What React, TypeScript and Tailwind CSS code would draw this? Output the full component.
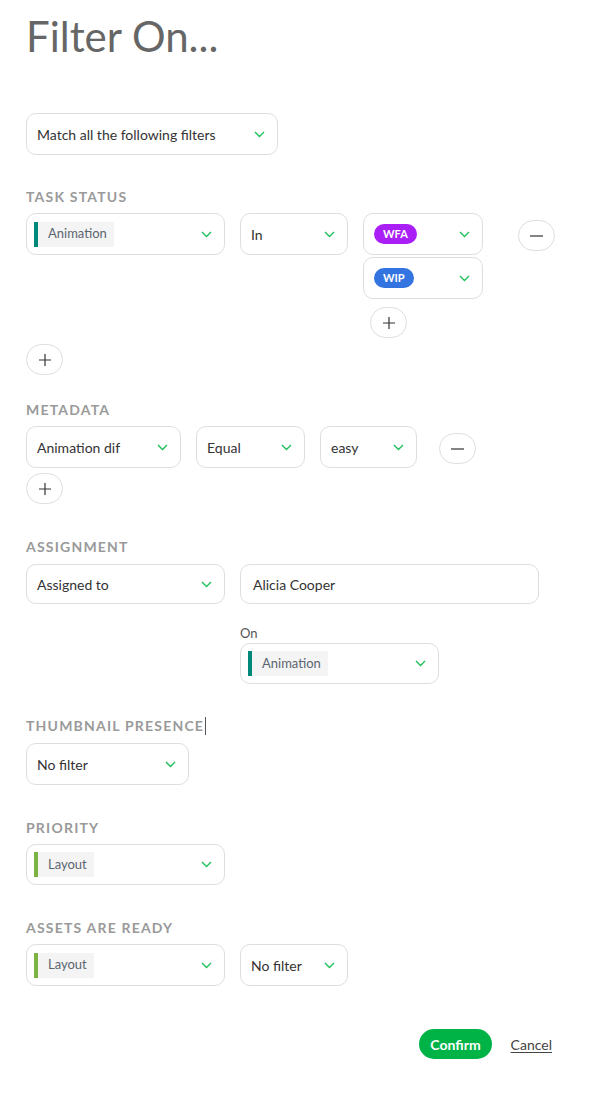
import React from "react"

const body = { fontFamily: "Lato, 'Noto Sans', sans-serif" }

function Chevron() {
  return (
    <svg width="11" height="7" viewBox="0 0 11 7" fill="none" className="shrink-0">
      <polyline points="1,1 5.5,5.5 10,1" stroke="#1fbf5a" strokeWidth="1.4" />
    </svg>
  )
}

function Select({ w, h = "h-[42px]", children }: { w: string; h?: string; children: React.ReactNode }) {
  return (
    <div className={`${w} ${h} flex items-center justify-between rounded-[10px] border border-[#dedede] bg-white pl-[10px] pr-[12px] text-[14px] text-[#333]`}>
      <div className="flex items-center whitespace-nowrap">{children}</div>
      <Chevron />
    </div>
  )
}

function Chip({ bar, label }: { bar: string; label: string }) {
  return (
    <div className="-ml-[3px] flex h-[25px] shrink-0 items-stretch">
      <div className={`w-[4px] shrink-0 ${bar}`} />
      <div className="flex items-center bg-[#f4f4f4] pl-[10px] pr-[7px] text-[13px] text-[#5b6470]">{label}</div>
    </div>
  )
}

function Pill({ bg, label }: { bg: string; label: string }) {
  return (
    <span className={`rounded-full ${bg} px-[9px] py-[3px] text-[11px] font-bold leading-[14px] text-white`}>{label}</span>
  )
}

function RoundBtn({ children, className = "" }: { children: React.ReactNode; className?: string }) {
  return (
    <div className={`flex h-[31px] w-[37px] items-center justify-center rounded-full border border-[#dedede] text-[#333] ${className}`}>
      {children}
    </div>
  )
}

const Plus = () => (
  <svg width="12" height="12" viewBox="0 0 12 12"><path d="M6 0v12M0 6h12" stroke="#333" strokeWidth="1.2" /></svg>
)
const Minus = () => (
  <svg width="13" height="12" viewBox="0 0 13 12"><path d="M0 6h13" stroke="#333" strokeWidth="1.2" /></svg>
)

function Label({ children, className = "" }: { children: React.ReactNode; className?: string }) {
  return (
    <div className={`h-5 text-[14px] font-bold uppercase leading-5 tracking-[1.2px] text-[#9a9a9a] ${className}`}>{children}</div>
  )
}

export default function App() {
  return (
    <div className="min-h-[1100px] w-[615px] bg-white pl-[26px]" style={body}>
      <h1 className="pt-[10px] text-[42px] leading-[52px] text-[#666]">Filter On...</h1>

      <div className="mt-[51px]">
        <Select w="w-[252px]">
          <span>Match all the following filters</span>
        </Select>
      </div>

      {/* task status */}
      <Label className="mt-[32px] mb-[6px]">Task status</Label>
      <div className="flex items-start">
        <Select w="w-[199px]"><Chip bar="bg-[#00897b]" label="Animation" /></Select>
        <div className="ml-[15px]"><Select w="w-[108px]"><span>In</span></Select></div>
        <div className="ml-[15px] flex w-[120px] flex-col gap-[2px]">
          <Select w="w-[120px]"><Pill bg="bg-[#a91ff5]" label="WFA" /></Select>
          <Select w="w-[120px]"><Pill bg="bg-[#3474e0]" label="WIP" /></Select>
          <RoundBtn className="ml-[7px] mt-[6px]"><Plus /></RoundBtn>
        </div>
        <RoundBtn className="ml-[35px] mt-[7px]"><Minus /></RoundBtn>
      </div>
      <RoundBtn className="mt-[6px]"><Plus /></RoundBtn>

      {/* metadata */}
      <Label className="mt-[25px] mb-[6px]">Metadata</Label>
      <div className="flex items-start">
        <Select w="w-[155px]"><span>Animation dif</span></Select>
        <div className="ml-[15px]"><Select w="w-[109px]"><span>Equal</span></Select></div>
        <div className="ml-[15px]"><Select w="w-[97px]"><span>easy</span></Select></div>
        <RoundBtn className="ml-[22px] mt-[7px]"><Minus /></RoundBtn>
      </div>
      <RoundBtn className="mt-[5px]"><Plus /></RoundBtn>

      {/* assignment */}
      <Label className="mt-[33px] mb-[7px]">Assignment</Label>
      <div className="flex items-start">
        <Select w="w-[199px]" h="h-[40px]"><span>Assigned to</span></Select>
        <div className="ml-[15px] flex flex-col">
          <div className="flex h-[40px] w-[299px] items-center rounded-[10px] border border-[#dedede] px-[12px] text-[14px] text-[#333]">Alicia Cooper</div>
          <div className="mt-[19px] h-[20px] text-[13px] leading-[20px] text-[#555]">On</div>
          <Select w="w-[199px]" h="h-[41px]"><Chip bar="bg-[#00897b]" label="Animation" /></Select>
        </div>
      </div>

      {/* thumbnail */}
      <Label className="mt-[32px] mb-[7px] flex items-center">Thumbnail presence<span className="ml-[1px] h-[18px] w-px bg-[#555]" /></Label>
      <Select w="w-[163px]"><span>No filter</span></Select>

      {/* priority */}
      <Label className="mt-[33px] mb-[6px]">Priority</Label>
      <Select w="w-[199px]" h="h-[41px]"><Chip bar="bg-[#7cb342]" label="Layout" /></Select>

      {/* assets */}
      <Label className="mt-[33px] mb-[6px]">Assets are ready</Label>
      <div className="flex items-start">
        <Select w="w-[199px]"><Chip bar="bg-[#7cb342]" label="Layout" /></Select>
        <div className="ml-[15px]"><Select w="w-[108px]"><span>No filter</span></Select></div>
      </div>

      <div className="mt-[43px] flex items-center justify-end pr-[63px]">
        <button className="h-[30px] rounded-full bg-[#00b347] px-[11px] text-[14px] font-bold text-white">Confirm</button>
        <a className="ml-[19px] text-[14px] text-[#444] underline underline-offset-2">Cancel</a>
      </div>
    </div>
  )
}
